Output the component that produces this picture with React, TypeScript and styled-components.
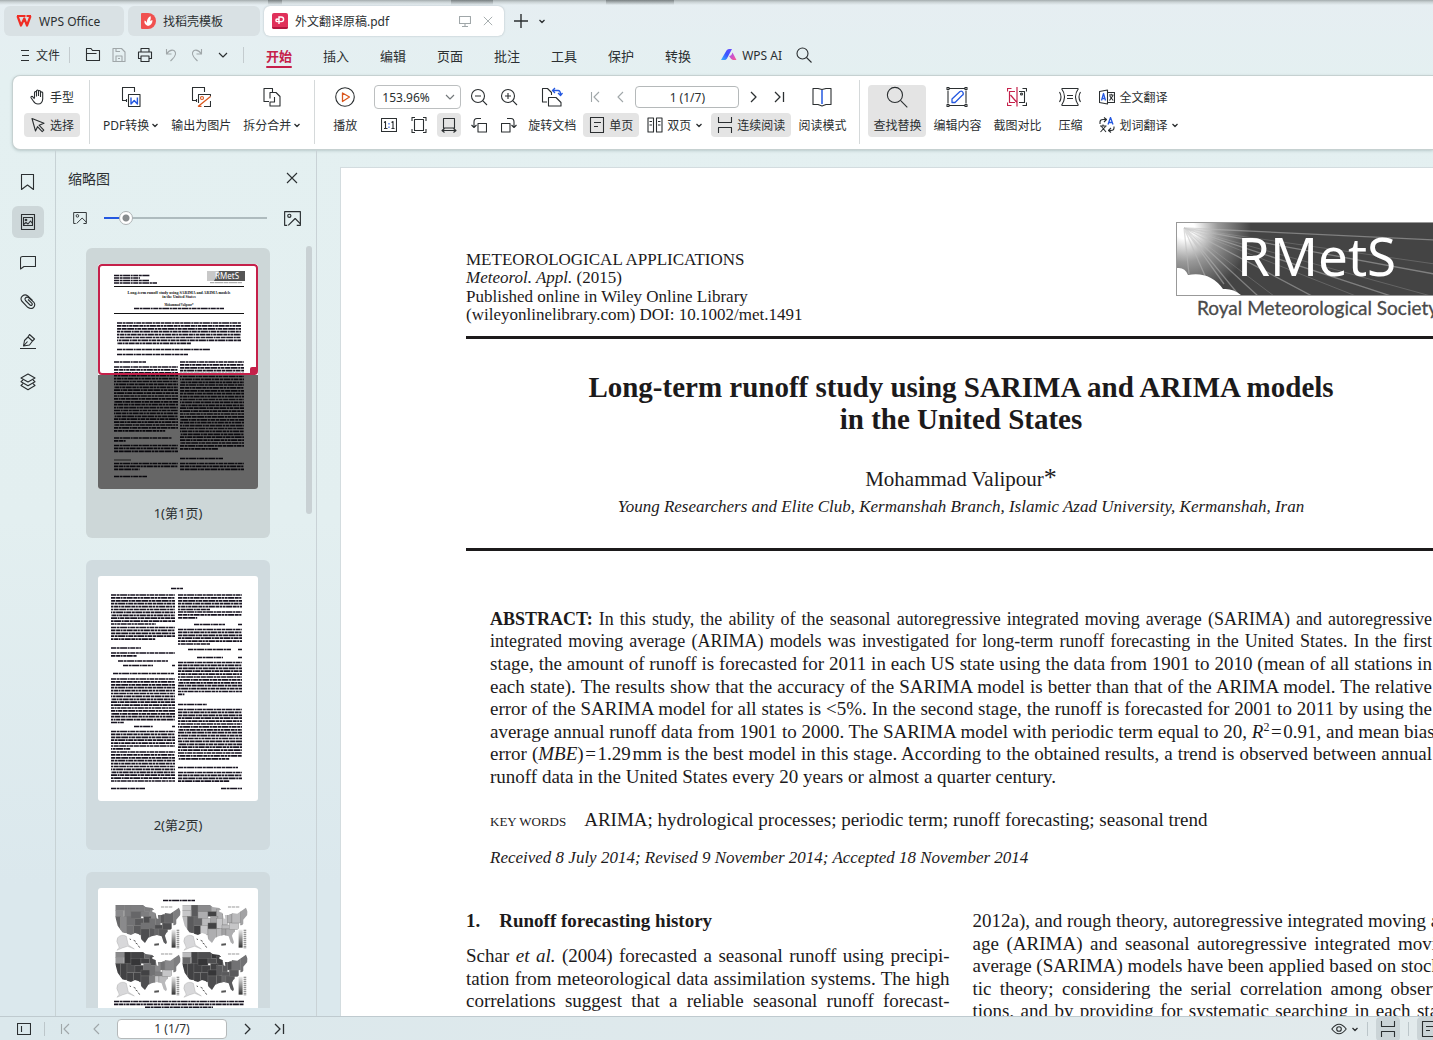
import React, { ReactNode, useState } from "react";
import styled, { createGlobalStyle, css } from "styled-components";

const UI_FONT = `"Noto Sans", "Noto Sans CJK SC", sans-serif`;
const SERIF = `"Liberation Serif", "Times New Roman", serif`;
const INK = "#2b2f31";
const RED = "#c5204a";
const BLUE = "#2458e0";
const ORANGE = "#d9571e";

const GlobalStyle = createGlobalStyle`
  *, *::before, *::after { box-sizing: border-box; }
  body { margin: 0; overflow: hidden; }
  button, input, select { font: inherit; color: inherit; }
  button { border: 0; background: none; padding: 0; margin: 0; cursor: pointer; }
`;

/* ---------- shell ---------- */

const Shell = styled.div`
  display: flex;
  flex-direction: column;
  height: 100vh;
  overflow: hidden;
  background: linear-gradient(180deg, #e6eef2 0, #e4f0f1 80px, #e3eff0 50%, #dbe8ed 85%, #dbe8ed 100%);
  color: ${INK};
  font-family: ${UI_FONT};
  font-size: 12px;
`;

const CAST = "linear-gradient(180deg, rgba(70, 76, 78, 0.45), transparent)";

const TabStrip = styled.header`
  display: flex;
  align-items: center;
  gap: 4px;
  padding: 6px 4px 4px;
  background:
    ${CAST} 268px 0 / 14px 5px no-repeat,
    ${CAST} 451px 0 / 42px 5px no-repeat,
    ${CAST} 606px 0 / 68px 5px no-repeat,
    linear-gradient(180deg, #a3abad 0, #c9d1d3 2px, transparent 5px);
`;

const Tab = styled.div<{ $width: number; $active?: boolean }>`
  display: flex;
  align-items: center;
  gap: 7px;
  width: ${(p) => p.$width}px;
  height: 30px;
  padding: 0 8px 0 ${(p) => (p.$active ? 8 : 12)}px;
  border-radius: 6px;
  background: ${(p) => (p.$active ? "#fff" : "#d9e1e4")};
  box-shadow: ${(p) => (p.$active ? "0 0 2px rgba(60, 80, 90, 0.35)" : "none")};
`;

const TabName = styled.button`
  flex: 1;
  text-align: left;
  white-space: nowrap;
`;

const IconButton = styled.button<{ $size?: number; $on?: boolean; $dim?: boolean }>`
  display: inline-flex;
  align-items: center;
  justify-content: center;
  flex: none;
  width: ${(p) => p.$size ?? 24}px;
  height: ${(p) => p.$size ?? 24}px;
  border-radius: 4px;
  background: ${(p) => (p.$on ? "#e4e4e4" : "transparent")};
  color: ${(p) => (p.$dim ? "#a0a7a9" : INK)};
`;

const MenuBar = styled.nav`
  display: flex;
  align-items: center;
  height: 35px;
  padding: 0 20px 5px;
`;

const FileButton = styled.button`
  display: flex;
  align-items: center;
  gap: 6px;
  width: 42px;
  white-space: nowrap;
`;

const Separator = styled.span<{ $gap: number; $after?: number }>`
  width: 1px;
  height: 16px;
  margin: 0 ${(p) => p.$after ?? p.$gap}px 0 ${(p) => p.$gap}px;
  background: #c4cccf;
`;

const QuickTools = styled.div`
  display: flex;
  gap: 2px;
`;

const MenuList = styled.div`
  display: flex;
  gap: 31px;
`;

const MenuItem = styled.button<{ $active?: boolean }>`
  position: relative;
  height: 26px;
  font-size: 13px;
  font-weight: ${(p) => (p.$active ? 700 : 400)};
  color: ${(p) => (p.$active ? RED : INK)};
  ${(p) =>
    p.$active &&
    css`
      &::after {
        content: "";
        position: absolute;
        left: 0;
        right: 0;
        bottom: 0;
        height: 2px;
        border-radius: 1px;
        background: ${RED};
      }
    `}
`;

const AiButton = styled.button`
  display: flex;
  align-items: center;
  gap: 5px;
  margin-left: 30px;
`;

/* ---------- ribbon ---------- */

const Ribbon = styled.section`
  display: flex;
  align-items: flex-start;
  flex: none;
  height: 75px;
  margin-left: 12px;
  padding: 9px 11px 0;
  border: 1px solid #c6d1d1;
  border-right: 0;
  border-radius: 8px 0 0 8px;
  background: #fff;
  box-shadow: 0 1px 3px rgba(60, 90, 90, 0.25);
  overflow: hidden;
`;

const Rows = styled.div`
  display: flex;
  flex-direction: column;
  gap: 4px;
  flex: none;
`;

const Row = styled.div<{ $gap?: number; $between?: boolean }>`
  display: flex;
  align-items: center;
  justify-content: ${(p) => (p.$between ? "space-between" : "flex-start")};
  gap: ${(p) => p.$gap ?? 0}px;
  height: 24px;
`;

const RibbonRule = styled.span<{ $before: number; $after: number }>`
  flex: none;
  width: 1px;
  height: 64px;
  margin: -5px ${(p) => p.$after}px 0 ${(p) => p.$before}px;
  background: #d5d9da;
`;

const InlineTool = styled.button<{ $on?: boolean; $pad?: number }>`
  display: flex;
  align-items: center;
  gap: 4px;
  height: 24px;
  padding: 0 ${(p) => p.$pad ?? 6}px;
  border-radius: 4px;
  background: ${(p) => (p.$on ? "#e4e4e4" : "transparent")};
  white-space: nowrap;
`;

const ToolSet = styled.div<{ $gap?: number }>`
  display: flex;
  flex: none;
  gap: ${(p) => p.$gap ?? 12}px;
`;

const BigButton = styled.button<{ $on?: boolean }>`
  display: grid;
  grid-template-rows: 24px 24px;
  row-gap: 4px;
  justify-items: center;
  align-items: center;
  flex: none;
  padding: 0 ${(p) => (p.$on ? 5 : 0)}px;
  border-radius: 4px;
  background: ${(p) => (p.$on ? "#e4e4e4" : "transparent")};
  white-space: nowrap;
`;

const BigLabel = styled.span`
  display: flex;
  align-items: center;
  gap: 2px;
`;

const ZoomGrid = styled.div`
  display: grid;
  grid-template-columns: repeat(5, 30px);
  grid-auto-rows: 24px;
  row-gap: 4px;
  justify-items: center;
  flex: none;
  margin: 0 4px 0 17px;
`;

const ZoomBox = styled.label`
  position: relative;
  grid-column: span 3;
  justify-self: start;
  display: flex;
  width: 87px;
  height: 24px;
  svg {
    position: absolute;
    right: 5px;
    top: 6px;
    color: #73787a;
    pointer-events: none;
  }
`;

const ZoomSelect = styled.select`
  appearance: none;
  width: 100%;
  padding: 0 7px;
  border: 1px solid #bcbfc0;
  border-radius: 4px;
  background: #fff;
`;

const PageInput = styled.input<{ $width: number; $height: number }>`
  width: ${(p) => p.$width}px;
  height: ${(p) => p.$height}px;
  padding: 0;
  border: 1px solid #b5b9ba;
  border-radius: 4px;
  background: #fff;
  text-align: center;
`;

/* ---------- work area ---------- */

const Workspace = styled.div`
  display: flex;
  flex: 1;
  min-height: 0;
`;

const Rail = styled.aside`
  display: flex;
  flex-direction: column;
  gap: 8px;
  flex: none;
  width: 56px;
  padding: 16px 12px;
  border-right: 1px solid #c7d2d5;
`;

const RailButton = styled.button<{ $on?: boolean }>`
  display: flex;
  align-items: center;
  justify-content: center;
  width: 32px;
  height: 32px;
  border-radius: 6px;
  background: ${(p) => (p.$on ? "#cdd7d9" : "transparent")};
`;

const Panel = styled.aside`
  display: flex;
  flex-direction: column;
  flex: none;
  width: 261px;
  border-right: 1px solid #c9d2d6;
`;

const PanelHead = styled.div`
  display: flex;
  align-items: center;
  justify-content: space-between;
  height: 56px;
  padding: 0 12px;
`;

const PanelTitle = styled.h2`
  margin: 0;
  font-size: 14px;
  font-weight: 400;
`;

const SizeRow = styled.div`
  display: flex;
  align-items: center;
  height: 24px;
  padding: 0 15px 0 17px;
`;

const SizeSlider = styled.input`
  appearance: none;
  flex: 1;
  height: 16px;
  margin: 0 17px;
  background: linear-gradient(90deg, ${BLUE} 0 15px, #aebbbe 15px) center / 100% 2px no-repeat;
  &::-webkit-slider-thumb {
    appearance: none;
    width: 14px;
    height: 14px;
    border: 1px solid #aeb3b5;
    border-radius: 50%;
    background: radial-gradient(circle, #888c8e 0 3px, #fff 4px);
  }
`;

const ThumbArea = styled.div`
  display: flex;
  flex: 1;
  min-height: 0;
  margin: 16px 4px 8px 30px;
  justify-content: space-between;
`;

const ThumbList = styled.div`
  display: flex;
  flex-direction: column;
  gap: 22px;
  padding-top: 2px;
  overflow: hidden;
`;

const Scrollbar = styled.div`
  width: 6px;
  height: 268px;
  border-radius: 3px;
  background: #c9d1d4;
`;

const ThumbCard = styled.button<{ $on?: boolean }>`
  display: flex;
  flex-direction: column;
  align-items: center;
  gap: 15px;
  flex: none;
  width: 184px;
  padding: 16px 12px;
  height: 290px;
  border-radius: 6px;
  background: ${(p) => (p.$on ? "#cdd7d8" : "#d0dbdf")};
`;

const ThumbSheet = styled.span`
  position: relative;
  display: block;
  width: 160px;
  height: 226px;
  border-radius: 3px;
  background: #fff;
  overflow: hidden;
  svg { display: block; }
`;

const ThumbLabel = styled.span`
  font-size: 13px;
  line-height: 18px;
`;

const Shade = styled.span`
  position: absolute;
  inset: 111px 0 0;
  background: rgba(0, 0, 0, 0.6);
`;

const ViewFrame = styled.span`
  position: absolute;
  inset: 0 0 114px;
  border: 2px solid ${RED};
  border-radius: 4px;
  &::after {
    content: "";
    position: absolute;
    right: 0;
    bottom: 0;
    width: 6px;
    height: 6px;
    border-radius: 2px 0 0;
    background: ${RED};
  }
`;

/* ---------- document ---------- */

const Canvas = styled.main`
  flex: 1;
  min-width: 0;
  padding: 17px 0 0 23px;
  overflow: hidden;
`;

const Sheet = styled.article`
  width: 1243px;
  min-height: 100%;
  padding: 54px 126px 0 125px;
  border: 1px solid #d3dcdf;
  background: #fff;
  color: #1c1a1b;
  font-family: ${SERIF};
`;

const Masthead = styled.div`
  display: flex;
  justify-content: space-between;
  border-bottom: 3px solid #1c1a1b;
`;

const Journal = styled.p`
  margin: 29px 0 12px;
  font-size: 17px;
  line-height: 18px;
  white-space: nowrap;
  span { display: block; }
  span:nth-child(2) { margin-bottom: 1px; }
`;

const TitleBlock = styled.div`
  padding: 32px 0 31px;
  border-bottom: 3px solid #1c1a1b;
  text-align: center;
`;

const PaperTitle = styled.h1`
  margin: 0 0 32px;
  font-size: 29px;
  line-height: 32px;
`;

const Author = styled.p`
  margin: 0 0 6px;
  font-size: 21px;
  line-height: 24px;
  span { font-size: 26px; line-height: 0; }
`;

const Small = styled.p`
  margin: 0;
  font-size: 17px;
  line-height: 20px;
  font-style: italic;
  white-space: nowrap;
`;

const AbstractBlock = styled.section`
  margin: 57px 24px 0;
`;

const Para = styled.p`
  margin: 0;
  font-size: 19px;
  line-height: 22px;
`;

const Line = styled.span<{ $ragged?: boolean; $dense?: boolean }>`
  display: block;
  font-size: ${(p) => (p.$dense ? 18 : 19)}px;
  text-align: ${(p) => (p.$ragged ? "left" : "justify")};
  text-align-last: ${(p) => (p.$ragged ? "left" : "justify")};
  white-space: nowrap;
  &:nth-child(even) { line-height: 23px; }
  sup { font-size: 12px; line-height: 0; }
`;

const Keywords = styled.p`
  display: flex;
  align-items: baseline;
  gap: 18px;
  margin: 21px 0 15px;
  font-size: 19px;
  line-height: 22px;
  small { font-size: 13px; }
`;

const Columns = styled.div`
  display: grid;
  grid-template-columns: repeat(2, minmax(0, 1fr));
  gap: 23px;
  margin-top: 42px;
`;

const SectionTitle = styled.h2`
  display: flex;
  gap: 19px;
  margin: 0 0 13px;
  font-size: 19px;
  line-height: 22px;
`;

/* ---------- status bar ---------- */

const StatusBar = styled.footer`
  display: flex;
  align-items: center;
  justify-content: space-between;
  flex: none;
  height: 24px;
  border-top: 1px solid #bfcacf;
  background: linear-gradient(90deg, #dbe8ec, #e2eaec);
  overflow: hidden;
`;

const StatusGroup = styled.div<{ $left: number }>`
  display: flex;
  align-items: center;
  flex: none;
  gap: 8px;
  height: 22px;
  padding-left: ${(p) => p.$left}px;
  & > button:last-child { margin-right: -8px; }
`;

const StatusRule = styled.span`
  width: 1px;
  height: 14px;
  background: #bcc6ca;
`;

const ViewToggle = styled(IconButton)`
  background: #cbd4d7;
`;

/* ---------- icons ---------- */

type IconProps = { w?: number; h?: number; box?: string; sw?: number; children: ReactNode };

const Icon = ({ w = 20, h, box, sw = 1.1, children }: IconProps) => (
  <svg
    width={w}
    height={h ?? w}
    viewBox={box ?? `0 0 ${w} ${h ?? w}`}
    fill="none"
    stroke="currentColor"
    strokeWidth={sw}
    strokeLinejoin="round"
    aria-hidden="true"
  >
    {children}
  </svg>
);

const Caret = () => (
  <Icon w={8} sw={1.3}><path d="M1.500 3L4 5.500 6.500 3" /></Icon>
);
const Chevron = () => (
  <Icon w={12}><path d="M2 4l4 4 4-4" /></Icon>
);
const Cross = ({ s = 12 }: { s?: number }) => (
  <Icon w={s} box="0 0 12 12"><path d="M1 1l10 10M11 1L1 11" /></Icon>
);
const First = () => <Icon w={12}><path d="M2.500 1v10M10 1L5 6l5 5" /></Icon>;
const Prev = () => <Icon w={12}><path d="M8 1L3 6l5 5" /></Icon>;
const Next = () => <Icon w={12} sw={1.3}><path d="M4 1l5 5-5 5" /></Icon>;
const Last = () => <Icon w={12} sw={1.3}><path d="M2 1l5 5-5 5M10.500 1v10" /></Icon>;

const WpsLogo = () => (
  <svg width="16" height="14" viewBox="0 0 16 14" aria-hidden="true">
    <path d="M1 2h8.500M10.500 2H15" stroke="#f02d24" strokeWidth="2" />
    <path d="M1.500 2L5 11.500 8.300 4.500 11 11.500 14.500 2" fill="none" stroke="#f02d24" strokeWidth="2.200" strokeLinejoin="round" />
  </svg>
);
const DocerLogo = () => (
  <svg width="16" height="16" viewBox="0 0 16 16" aria-hidden="true">
    <path d="M2 0h6a8 8 0 0 1 0 16H2a1 1 0 0 1-1-1V1a1 1 0 0 1 1-1z" fill="#f0504f" />
    <path d="M8 13c-3-1-4-3-3.500-5.500C6 8 6.500 9 7 10c-.5-3 1-5.500 3.500-7 .5 2 .3 3.500-.5 5 .8-.6 1.500-.8 2.500-.7C12.500 10 11 12.500 8 13z" fill="#fff" />
  </svg>
);
const PdfLogo = () => (
  <svg width="16" height="16" viewBox="0 0 16 16" aria-hidden="true">
    <rect width="16" height="16" rx="2" fill="#e0305a" />
    <path d="M0 14h16v0a2 2 0 0 1-2 2H2a2 2 0 0 1-2-2z" fill="#b3173f" />
    <path d="M7 11V4H9.300a2.300 2.300 0 0 1 0 4.600H5.200a1.300 1.300 0 1 1 1.300-1.500" fill="none" stroke="#fff" strokeWidth="1.400" />
  </svg>
);
const AiLogo = () => (
  <svg width="16" height="14" viewBox="0 0 16 14" aria-hidden="true">
    <defs>
      <linearGradient id="aiA" x1="0" y1="1" x2="1" y2="0">
        <stop offset="0" stopColor="#35b6ff" /><stop offset="0.500" stopColor="#3a55ff" /><stop offset="1" stopColor="#6a48ff" />
      </linearGradient>
      <linearGradient id="aiB" x1="0" y1="0" x2="1" y2="1">
        <stop offset="0" stopColor="#a04dff" /><stop offset="1" stopColor="#ff5a8c" />
      </linearGradient>
    </defs>
    <path d="M0 12L5.500 2.500Q6.300 1 8 1h3L6 10.500Q5 12 3.500 12z" fill="url(#aiA)" />
    <path d="M8 8q2.500 0 3.500-3.500L15.500 12H12Q10 11.500 8 8z" fill="url(#aiB)" />
  </svg>
);

const Hamburger = () => <Icon w={10} h={12}><path d="M1 1.500h8M2 6.500h7M1 11.500h8" /></Icon>;
const Folder = () => <Icon w={16}><path d="M1.500 13.500v-12h4.500l1.500 2h7v10zM1.500 6.500h10" /></Icon>;
const Save = () => <Icon w={16}><path d="M2 1.500h8.500l3.500 3.500v9.500H2zM5 1.500v3h4M5 14v-5h6v5M7 11.500h2" /></Icon>;
const Printer = () => <Icon w={16}><path d="M4 5V1.500h8V5M4 11.500H1.500V5h13v6.500H12M4 9h8v5.500H4z" /></Icon>;
const Undo = () => <Icon w={16}><path d="M3.500 2v5h5M3.500 7Q7 2 11 3.500q4 3-2 9l-1.500 1.500" /></Icon>;
const Redo = () => <Icon w={16}><path d="M12.500 2v5h-5M12.500 7Q9 2 5 3.500q-4 3 2 9L8.500 14" /></Icon>;
const Search = ({ s = 16 }: { s?: number }) => (
  <Icon w={s} box="0 0 16 16" sw={s > 18 ? 0.8 : 1.1}><circle cx="6.500" cy="6.500" r="5.500" /><path d="M10.500 10.500l5 5" /></Icon>
);
const ZoomSign = ({ plus }: { plus?: boolean }) => (
  <Icon w={18}><circle cx="8" cy="8" r="6.500" /><path d="M12.700 12.700l4.300 4.300M5 8h6" />{plus && <path d="M8 5v6" />}</Icon>
);
const Hand = () => (
  <Icon w={16}><path d="M4.500 9V3.500a1 1 0 0 1 2 0V7.500M6.500 7V2a1 1 0 0 1 2 0v5M8.500 7V2.500a1 1 0 0 1 2 0V8M10.500 8V4a1 1 0 0 1 2.200 0V10c0 3-1.700 5-4.700 5-2.500 0-3.500-1-4.700-3L1.200 9C.5 7.700 2 6.800 3 8l1.500 2" /></Icon>
);
const Pointer = () => <Icon w={16}><path d="M2 1.500l12 4.700-5 2 4.800 5-1.600 1.500-4.700-5L5.500 14z" /></Icon>;

const Convert = () => (
  <Icon><path d="M5 13.500H1.500V.5h12V5M5.500 12v3" /><rect x="7.500" y="7.500" width="11.500" height="12" /><path d="M10 10.500v6.500l3.200-3.500 3.200 3.500v-6.500" stroke={BLUE} strokeWidth="1.400" /></Icon>
);
const ToImage = () => (
  <Icon><path d="M5 13.500H1.500V.5h12V5M5.500 12v3" /><path d="M19.500 14v5.500H13M7.500 16V7.500h12v2" /><circle cx="11" cy="11" r="1.500" stroke={ORANGE} /><path d="M7 19.500L19.500 9.500M7.500 19.500h3" stroke={ORANGE} strokeWidth="1.300" /></Icon>
);
const Split = () => (
  <Icon><path d="M7 14.500H2V1.500h8.500V5" /><path d="M8 11.500v-6h6l4 4v9.500H8v-4h4.500v-5" /></Icon>
);
const Play = () => <Icon><circle cx="10" cy="10" r="9.300" /><path d="M7.500 6l7 4-7 4.500z" stroke={ORANGE} strokeWidth="1.300" /></Icon>;
const Actual = () => (
  <Icon w={16}><rect x=".5" y="1.500" width="15" height="13" /><path d="M3 5.500l1.500-1v7M3 11.500h3.500M10.500 5.500l1.500-1v7M10.500 11.500H13.500" /><path d="M8 6v1.500M8 9.500V11" stroke={BLUE} /></Icon>
);
const FitPage = () => <Icon w={16}><rect x="3.500" y="2.500" width="9" height="11" /><path d="M1 4V.5h3M12 .5h3V4M15 12v3.500h-3M4 15.500H1V12" /></Icon>;
const FitWidth = () => <Icon w={16}><path d="M2.500 11V1.500h11V11zM1 13.500h14M3.500 11.500l-2.500 2 2.500 2M12.500 11.500l2.500 2-2.500 2" /></Icon>;
const TurnLeft = () => <Icon w={16}><rect x="7" y="6.500" width="8.500" height="8.500" /><path d="M10 1.500H6Q3 1.500 3 5v5M.5 8L3 10.500 5.500 8" /></Icon>;
const TurnRight = () => <Icon w={16}><rect x=".5" y="6.500" width="8.500" height="8.500" /><path d="M6 1.500h4q3 0 3 3.500v5M10.500 8l2.500 2.500L15.500 8" /></Icon>;
const RotateDoc = () => (
  <Icon w={22} h={20}><path d="M6 15H1.500V1.500h5l4 4V8M7.500 19v-8.500H15l5 5V19z" /><path d="M12 3.500h5q2.500 0 2.500 4M14 1l-2.500 2.500L14 6M17 6l2.500 2.500L21.500 6" stroke={BLUE} strokeWidth="1.300" /></Icon>
);
const Single = () => <Icon w={16}><path d="M1.500.5h13v15h-13zM5 5.500h7M5 9.500h4" /></Icon>;
const Double = () => <Icon w={16}><path d="M1 1h5.500v14H1zM9.500 1H15v14H9.500zM2.500 4.500H5M2.500 8H5M11 4.500h2.500M11 8h2.500" /></Icon>;
const Continuous = () => <Icon w={16}><path d="M1.500 0v5.500h13V0M1.500 16v-5.500h13V16" /></Icon>;
const Book = () => <Icon w={20}><path d="M10 2.500L6 1.500H1v16h5l4 1.500 4-1.500h5v-16h-5z" /><path d="M10 3v14" stroke={BLUE} strokeWidth="1.500" /></Icon>;
const EditBox = () => (
  <Icon w={22} h={20}><path d="M3 1.500h16M3 18.500h16M2 3.500v13M20 3.500v13" /><path d="M1 .5h2v2H1zM19 .5h2v2h-2zM1 17.500h2v2H1zM19 17.500h2v2h-2z" /><path d="M6 15.500v-3.500l8-7.500q2-1 3 1t-1 3l-7 7z" stroke={BLUE} strokeWidth="1.300" /></Icon>
);
const Compare = () => (
  <Icon w={20}><path d="M15.500 1.500h4v3M19.500 15.500v3h-4M12 4.500h5.500v11H12" /><circle cx="14.500" cy="7" r="1" /><path d="M10 0v19.500M4.500 1.500h-4v3M.5 15.500v3h4M8 4.500H2.500v11H8M3.500 8l6 7" stroke={RED} strokeWidth="1.200" /></Icon>
);
const Compress = () => <Icon w={22} h={20}><path d="M3 1.500h16M3 18.500h16M2.500 1.500q6 8 0 17M19.500 1.500q-6 8 0 17M.5 5q3 5 0 10M21.500 5q-3 5 0 10M8 8.500h6M8 11.500h6" /></Icon>;

const Translate = () => (
  <Icon w={16}><path d="M9 3.500h6.500v10H9M8.500 1v14L.5 13.500v-11z" /><path d="M2.500 11.500l2-7 2 7M3 9.500h3" stroke={BLUE} strokeWidth="1.300" /><path d="M10 6h4.500M12.200 4.800V6M10.500 11.500l3.500-5M10.800 7l3.400 4.500" /></Icon>
);
const WordTranslate = () => (
  <Icon w={16}><path d="M9 7.500l2.500-7 2.500 7M10 5.500h3.500" stroke={BLUE} strokeWidth="1.300" /><path d="M1 7V5q0-2.500 3-2.500h3M5 .5l2.500 2L5 5M15 9.500v1.500q0 2.500-3 2.500h-2M12 11l-2.500 2.500L12 15.500M1 9h6.500M4 7.500V9M1.500 15L6.500 9.500M2.500 9.500L7 15" /></Icon>
);

const Bookmark = () => <Icon w={16}><path d="M1.500 0.500h12v15l-6-4.500-6 4.500z" /></Icon>;
const ThumbIcon = () => <Icon w={16}><rect x="1.500" y="0.500" width="13" height="15" /><rect x="3.500" y="3.500" width="9" height="8" /><circle cx="6" cy="6" r=".8" /><path d="M3.500 10.500l2.500-2 2 1.500 2.500-3 2 2.500" /></Icon>;
const Comment = () => <Icon w={16}><path d="M.5 15V4.500q0-2 2-2H15.500v10H4z" /></Icon>;
const Clip = () => <Icon w={16}><path d="M12.500 6.500L7.500 1.700Q5 0 2.500 2T1.700 7l6 6.300q3 2.200 5.600.5 2.700-2.800.4-5.600L8.500 3.500Q6.500 2.500 5.500 3.800T5.500 6.500l4.500 4.500q1.200.8 1.900.1.800-.8-.1-2L8 5.500" /></Icon>;
const Pen = () => <Icon w={16}><path d="M0 14.500h16M3.500 12l1-5.500L8 3l4.500 4-3 4zM8 3L9.500.5l5 4.500-2 2M3.500 12l4-4.500" /></Icon>;
const Layers = () => <Icon w={16} h={18}><path d="M8 1l7 4-7 4-7-4zM3 7L1 8.700 8 12.800l7-4.100L13 7M3 10.700l-2 1.800L8 16.800l7-4.300-2-1.800" /></Icon>;
const Picture = ({ s }: { s: number }) => <Icon w={s} h={s - 2} box="0 0 16 14"><path d="M3 13.400H.6V.6h14.800v12.800H12" /><circle cx="5" cy="4.500" r="1.500" /><path d="M4 13.500l6.500-6.500 5 5" /></Icon>;
const Monitor = () => <Icon w={12}><path d="M.5 1.500h11v7H.5zM3 11.500h6M6 8.500v3" /></Icon>;
const PlusIcon = () => <Icon w={14} sw={1.400}><path d="M7 0v14M0 7h14" /></Icon>;
const PanelIcon = () => <Icon w={14} h={12}><path d="M.5.5h13v11H.5zM4.500 3v6" /></Icon>;
const Eye = () => <Icon w={16}><path d="M.8 8Q8-1.500 15.200 8 8 17.500.8 8z" /><circle cx="8" cy="8" r="2.300" /></Icon>;

/* ---------- society logo ---------- */

const SocietyLogo = () => (
  <svg width="280" height="104" viewBox="0 0 280 104" role="img" aria-label="RMetS Royal Meteorological Society">
    <defs>
      <radialGradient id="sun" gradientUnits="userSpaceOnUse" cx="9" cy="7" r="66">
        <stop offset="0" stopColor="#fff" />
        <stop offset="0.150" stopColor="#fff" />
        <stop offset="0.500" stopColor="#999" />
        <stop offset="1" stopColor="#444" />
      </radialGradient>
      <clipPath id="plate"><rect x="0" y="0" width="280" height="73" /></clipPath>
    </defs>
    <rect x="0.500" y="0.500" width="279" height="73" fill="url(#sun)" stroke="#999" />
    <g clipPath="url(#plate)" stroke="#bbb" strokeOpacity="0.500" fill="none">
      <path d="M8 6L13 52M8 6L30 56M8 6L48 62M8 6L62 72M8 6L82 74M8 6L136 74M8 6L215 74M8 6L280 56M8 6L280 19" strokeWidth="1.300" />
      <path d="M8 6L98 74M8 6L180 74M8 6L255 74M8 6L280 45" strokeWidth="0.800" strokeOpacity="0.350" />
    </g>
    <path d="M1 73V46q8-1 11 7 22-4 35 14 10-1 18 6z" fill="#fff" />
    <text x="61" y="54" fill="#fff" fontFamily="Noto Sans, sans-serif" fontSize="53">RMetS</text>
    <text x="21" y="93" fill="#4a4a4a" stroke="#4a4a4a" strokeWidth="0.300" fontFamily="Lato, sans-serif" fontSize="19">Royal Meteorological Society</text>
  </svg>
);

/* ---------- thumbnails ---------- */

type Block = { x: number; w: number; y: number; n: number; last?: number };

const PITCH = 2.9;
const DASHES = ["5 .6 3 .5 7 .6 2 .5", "3 .5 6 .6 4 .5 2 .6", "7 .6 2 .5 4 .6 5 .5"];

const TextBlock = ({ x, w, y, n, last = 0.7 }: Block) => (
  <g stroke="#16121f" strokeWidth="1.700">
    {Array.from({ length: n }, (_, i) => (
      <path
        key={i}
        d={`M${x} ${y + i * PITCH}h${n > 1 && i === n - 1 ? w * last : w}`}
        strokeDasharray={DASHES[i % 3]}
        strokeDashoffset={(i * 5) % 13}
      />
    ))}
  </g>
);

const firstPage: Block[] = [
  { x: 16, w: 36, y: 11.5, n: 1 }, { x: 16, w: 26, y: 14, n: 1 }, { x: 16, w: 35, y: 16.5, n: 1 }, { x: 16, w: 43, y: 19, n: 1 },
  { x: 36, w: 90, y: 44.5, n: 1 },
  { x: 19, w: 124, y: 59, n: 8, last: 0.6 }, { x: 19, w: 93, y: 85.5, n: 1 }, { x: 19, w: 71, y: 90.5, n: 1 },
  { x: 16, w: 32, y: 98, n: 1 }, { x: 16, w: 64, y: 103, n: 23, last: 0.8 },
  { x: 16, w: 58, y: 174, n: 2, last: 0.2 }, { x: 16, w: 64, y: 181.5, n: 3, last: 1 },
  { x: 16, w: 64, y: 199.5, n: 3, last: 0.4 }, { x: 16, w: 33, y: 212.5, n: 1 },
  { x: 82, w: 64, y: 98, n: 8, last: 1 }, { x: 82, w: 64, y: 121, n: 23, last: 0.6 },
  { x: 82, w: 43, y: 194.5, n: 1 }, { x: 82, w: 64, y: 199.5, n: 3, last: 1 },
];

const secondPage: Block[] = [
  { x: 73, w: 12, y: 12.5, n: 1 },
  { x: 13, w: 64, y: 19, n: 11 }, { x: 13, w: 64, y: 51.5, n: 5 }, { x: 13, w: 30, y: 72, n: 1 },
  { x: 13, w: 64, y: 77, n: 2, last: 0.4 }, { x: 20, w: 50, y: 85, n: 1 }, { x: 25, w: 30, y: 89.5, n: 1 }, { x: 74, w: 3, y: 89.5, n: 1 },
  { x: 15, w: 61, y: 97.5, n: 1 }, { x: 13, w: 64, y: 103, n: 16, last: 0.2 }, { x: 36, w: 19, y: 150.5, n: 1 }, { x: 74, w: 3, y: 150.5, n: 1 },
  { x: 13, w: 64, y: 155.500, n: 7, last: 0.3 }, { x: 13, w: 64, y: 176, n: 11, last: 1 }, { x: 13, w: 34, y: 212.5, n: 1 },
  { x: 80, w: 64, y: 19, n: 6, last: 0.5 }, { x: 80, w: 64, y: 36, n: 3, last: 0.3 }, { x: 96, w: 31, y: 48.5, n: 1 }, { x: 140, w: 4, y: 48.5, n: 1 },
  { x: 80, w: 64, y: 53.5, n: 6, last: 0.5 }, { x: 90, w: 43, y: 73.5, n: 1 }, { x: 140, w: 4, y: 73.5, n: 1 }, { x: 99, w: 26, y: 81.5, n: 1 }, { x: 140, w: 4, y: 81.5, n: 1 },
  { x: 80, w: 64, y: 86.5, n: 12, last: 0.1 }, { x: 80, w: 29, y: 128.5, n: 1 }, { x: 80, w: 64, y: 133.5, n: 18, last: 0.8 },
  { x: 80, w: 60, y: 191.5, n: 1 }, { x: 80, w: 64, y: 196.5, n: 4, last: 0.8 }, { x: 123, w: 21, y: 212.5, n: 1 },
];

const FirstThumb = () => (
  <svg width="160" height="226" aria-hidden="true">
    <rect width="160" height="226" fill="#fff" />
    {firstPage.map((b, i) => <TextBlock key={i} {...b} />)}
    <path d="M16 22.500h130M16 49.500h130" stroke="#111" />
    <path d="M16 196h17" stroke="#111" strokeWidth="0.800" />
    <rect x="109" y="7" width="38" height="10" fill="#555" />
    <path d="M109 7h12l-5 10h-7z" fill="#c8c8c8" />
    <text x="117" y="15" fill="#fff" fontFamily="Noto Sans, sans-serif" fontSize="8">RMetS</text>
    <path d="M112 18.700h32" stroke="#999" strokeDasharray="4 .5 9 .5" />
    <g fill="#111" fontFamily="Liberation Serif, serif" fontWeight="700" textAnchor="middle">
      <text x="81" y="30" fontSize="4">Long-term runoff study using SARIMA and ARIMA models</text>
      <text x="81" y="34" fontSize="4">in the United States</text>
      <text x="81" y="42" fontSize="3">Mohammad Valipour*</text>
    </g>
  </svg>
);

const SecondThumb = () => (
  <svg width="160" height="226" aria-hidden="true">
    {secondPage.map((b, i) => <TextBlock key={i} {...b} />)}
  </svg>
);

const OUTLINE =
  "M1 0L84 0 92 6 112 9 120 18 126 30 140 30 150 24 166 26 178 18 192 8 197 20 196 30 184 44 184 56 172 70 154 84 150 92 156 112 153 118 146 112 140 94 126 90 110 94 100 98 90 114 80 104 72 88 60 84 48 90 22 82 8 62 1 36z";

const CELLS = [
  [0, 0, 28, 16], [0, 16, 26, 18], [28, 0, 20, 38], [48, 0, 40, 22], [88, 0, 34, 20], [0, 34, 16, 60], [16, 34, 20, 50], [36, 34, 24, 28],
  [48, 20, 30, 20], [78, 20, 26, 14], [104, 12, 20, 28], [36, 62, 20, 30], [56, 62, 22, 28], [60, 40, 26, 22], [86, 34, 22, 20], [78, 54, 34, 18],
  [78, 72, 26, 46], [104, 40, 18, 30], [104, 70, 16, 30], [122, 28, 14, 32], [136, 28, 14, 26], [120, 60, 22, 12], [120, 72, 12, 24],
  [132, 72, 26, 48], [142, 54, 28, 20], [150, 20, 26, 34], [176, 0, 24, 60],
];

const MapFigure = ({ x, y, shades }: { x: number; y: number; shades: string }) => {
  const id = `map${x}-${y}`;
  return (
    <g transform={`translate(${x} ${y}) scale(.333)`}>
      <clipPath id={id}><path d={OUTLINE} /></clipPath>
      <g clipPath={`url(#${id})`} stroke="#777" strokeWidth="1">
        {CELLS.map(([cx, cy, w, h], i) => {
          const v = parseInt(shades[i % shades.length], 16) * 12 + 42;
          return <rect key={i} x={cx} y={cy} width={w} height={h} fill={`rgb(${v},${v},${v + 2})`} />;
        })}
      </g>
      <path d="M112 16l12-4 4 10 2 20-5-2-3-16-10-4z" fill="#fff" />
      <path d="M8 98q12-12 26-4l6 26 18 12-20-8q-16 4-32 12 10-8 4-16-8-10-2-22z" fill="#d8d8da" stroke="#999" />
      <path d="M44 102l4 2M56 106l6 3M62 114l6 4M70 122l4 6" stroke="#555" strokeWidth="3" />
      <path d="M118 116l14-1v6l-14 1z" fill="#555" />
      <path d="M138 6h36" stroke="#999" strokeWidth="3" strokeDasharray="10 2" />
      <rect x="170" y="74" width="12" height="54" fill="url(#legend)" />
      <path d="M189 74v56" stroke="#777" strokeWidth="8" strokeDasharray="3 3" />
    </g>
  );
};

const ThirdThumb = () => (
  <svg width="160" height="226" aria-hidden="true">
    <defs>
      <linearGradient id="legend" x1="0" y1="0" x2="0" y2="1">
        <stop offset="0" stopColor="#eee" /><stop offset="1" stopColor="#333" />
      </linearGradient>
    </defs>
    <TextBlock x={65} w={32} y={12.5} n={1} />
    <MapFigure x={17} y={17} shades="7877758657864436364643543576" />
    <MapFigure x={84} y={17} shades="dd48bc45b2b2dca2bdcdbcabdca" />
    <MapFigure x={17} y={64} shades="8912522312322262367867dcd87" />
    <MapFigure x={84} y={64} shades="c52312221322222134343454466" />
    <TextBlock x={16} w={130} y={113.500} n={2} last={1} />
    <TextBlock x={47} w={68} y={119.300} n={1} />
  </svg>
);

/* ---------- data ---------- */

const menus = ["开始", "插入", "编辑", "页面", "批注", "工具", "保护", "转换"];

const rail: [string, () => ReactNode][] = [
  ["书签", Bookmark], ["缩略图", ThumbIcon], ["批注", Comment], ["附件", Clip], ["签名", Pen], ["图层", Layers],
];

type TextLine = { text: ReactNode; dense?: boolean; ragged?: boolean };

const abstractLines: TextLine[] = [
  { dense: true, text: <><b>ABSTRACT:</b> In this study, the ability of the seasonal autoregressive integrated moving average (SARIMA) and autoregressive</> },
  { dense: true, text: "integrated moving average (ARIMA) models was investigated for long-term runoff forecasting in the United States. In the first" },
  { text: "stage, the amount of runoff is forecasted for 2011 in each US state using the data from 1901 to 2010 (mean of all stations in" },
  { text: "each state). The results show that the accuracy of the SARIMA model is better than that of the ARIMA model. The relative" },
  { text: "error of the SARIMA model for all states is <5%. In the second stage, the runoff is forecasted for 2001 to 2011 by using the" },
  { text: <>average annual runoff data from 1901 to 2000. The SARIMA model with periodic term equal to 20, <i>R</i><sup>2</sup>{"\u200a=\u200a"}0.91, and mean bias</> },
  { text: <>error (<i>MBE</i>){"\u200a=\u200a"}1.29{"\u200a"}mm is the best model in this stage. According to the obtained results, a trend is observed between annual</> },
  { ragged: true, text: "runoff data in the United States every 20 years or almost a quarter century." },
];

const leftLines: TextLine[] = [
  { text: <>Schar <i>et al.</i> (2004) forecasted a seasonal runoff using precipi-</> },
  { text: "tation from meteorological data assimilation systems. The high" },
  { text: "correlations suggest that a reliable seasonal runoff forecast-" },
];

const rightLines: TextLine[] = [
  { text: "2012a), and rough theory, autoregressive integrated moving aver-" },
  { text: "age (ARIMA) and seasonal autoregressive integrated moving" },
  { text: "average (SARIMA) models have been applied based on stochas-" },
  { text: "tic theory; considering the serial correlation among observa-" },
  { text: "tions, and by providing for systematic searching in each stage" },
];

/* ---------- composition ---------- */

const SetLines = ({ lines }: { lines: TextLine[] }) => (
  <Para>
    {lines.map((l, i) => <Line key={i} $dense={l.dense} $ragged={l.ragged}>{l.text}</Line>)}
  </Para>
);

const Tool = ({ icon, label, on, menu }: { icon: ReactNode; label: string; on?: boolean; menu?: boolean }) => (
  <BigButton $on={on}>
    {icon}
    <BigLabel>{label}{menu && <Caret />}</BigLabel>
  </BigButton>
);

const Pager = ({ page, onPage }: { page: string; onPage: (v: string) => void }) => (
  <Row $between>
    <IconButton $dim aria-label="第一页"><First /></IconButton>
    <IconButton $dim aria-label="上一页"><Prev /></IconButton>
    <PageInput $width={104} $height={22} aria-label="页码" value={page} onChange={(e) => onPage(e.target.value)} />
    <IconButton aria-label="下一页"><Next /></IconButton>
    <IconButton aria-label="最后一页"><Last /></IconButton>
  </Row>
);

export default function App() {
  const [page, setPage] = useState("1 (1/7)");
  const [size, setSize] = useState(10);

  return (
    <Shell>
      <GlobalStyle />
      <TabStrip>
        <Tab $width={120}><WpsLogo /><TabName>WPS Office</TabName></Tab>
        <Tab $width={132}><DocerLogo /><TabName>找稻壳模板</TabName></Tab>
        <Tab $width={240} $active>
          <PdfLogo /><TabName>外文翻译原稿.pdf</TabName>
          <IconButton $size={16} $dim aria-label="显示"><Monitor /></IconButton>
          <IconButton $size={16} $dim aria-label="关闭标签"><Cross s={10} /></IconButton>
        </Tab>
        <IconButton $size={26} aria-label="新建标签"><PlusIcon /></IconButton>
        <IconButton $size={8} aria-label="标签列表"><Caret /></IconButton>
      </TabStrip>

      <MenuBar>
        <FileButton><Hamburger />文件</FileButton>
        <Separator $gap={7} $after={11} />
        <QuickTools>
          <IconButton aria-label="打开"><Folder /></IconButton>
          <IconButton $dim aria-label="保存"><Save /></IconButton>
          <IconButton aria-label="打印"><Printer /></IconButton>
          <IconButton $dim aria-label="撤销"><Undo /></IconButton>
          <IconButton $dim aria-label="恢复"><Redo /></IconButton>
          <IconButton aria-label="更多"><Chevron /></IconButton>
        </QuickTools>
        <Separator $gap={8} $after={22} />
        <MenuList>
          {menus.map((m, i) => <MenuItem key={m} $active={i === 0}>{m}</MenuItem>)}
        </MenuList>
        <AiButton><AiLogo />WPS AI</AiButton>
        <IconButton aria-label="搜索" $size={44}><Search /></IconButton>
      </MenuBar>

      <Ribbon>
        <Rows>
          <InlineTool><Hand />手型</InlineTool>
          <InlineTool $on><Pointer />选择</InlineTool>
        </Rows>
        <RibbonRule $before={9} $after={13} />
        <ToolSet>
          <Tool icon={<Convert />} label="PDF转换" menu />
          <Tool icon={<ToImage />} label="输出为图片" />
          <Tool icon={<Split />} label="拆分合并" menu />
        </ToolSet>
        <RibbonRule $before={13} $after={18} />
        <Tool icon={<Play />} label="播放" />
        <ZoomGrid>
          <ZoomBox>
            <ZoomSelect aria-label="缩放比例" defaultValue="153.96%"><option>153.96%</option><option>100%</option></ZoomSelect>
            <Chevron />
          </ZoomBox>
          <IconButton aria-label="缩小"><ZoomSign /></IconButton>
          <IconButton aria-label="放大"><ZoomSign plus /></IconButton>
          <IconButton aria-label="实际大小"><Actual /></IconButton>
          <IconButton aria-label="适合页面"><FitPage /></IconButton>
          <IconButton $on aria-label="适合宽度"><FitWidth /></IconButton>
          <IconButton aria-label="向左旋转"><TurnLeft /></IconButton>
          <IconButton aria-label="向右旋转"><TurnRight /></IconButton>
        </ZoomGrid>
        <ToolSet $gap={7}>
          <Tool icon={<RotateDoc />} label="旋转文档" />
          <Rows>
            <Pager page={page} onPage={setPage} />
            <Row $gap={8}>
              <InlineTool $on><Single />单页</InlineTool>
              <InlineTool $pad={0}><Double />双页<Caret /></InlineTool>
              <InlineTool $on><Continuous />连续阅读</InlineTool>
            </Row>
          </Rows>
          <Tool icon={<Book />} label="阅读模式" />
        </ToolSet>
        <RibbonRule $before={13} $after={8} />
        <ToolSet $gap={7}>
          <Tool icon={<Search s={22} />} label="查找替换" on />
          <ToolSet>
            <Tool icon={<EditBox />} label="编辑内容" />
            <ToolSet $gap={17}>
              <Tool icon={<Compare />} label="截图对比" />
              <Tool icon={<Compress />} label="压缩" />
              <Rows>
                <InlineTool $pad={0}><Translate />全文翻译</InlineTool>
                <InlineTool $pad={0}><WordTranslate />划词翻译<Caret /></InlineTool>
              </Rows>
            </ToolSet>
          </ToolSet>
        </ToolSet>
      </Ribbon>

      <Workspace>
        <Rail>
          {rail.map(([name, Glyph], i) => (
            <RailButton key={name} $on={i === 1} aria-label={name}><Glyph /></RailButton>
          ))}
        </Rail>
        <Panel>
          <PanelHead>
            <PanelTitle>缩略图</PanelTitle>
            <IconButton aria-label="关闭面板"><Cross /></IconButton>
          </PanelHead>
          <SizeRow>
            <Picture s={14} />
            <SizeSlider type="range" aria-label="缩略图大小" min={0} max={100} value={size} onChange={(e) => setSize(Number(e.target.value))} />
            <Picture s={17} />
          </SizeRow>
          <ThumbArea>
            <ThumbList>
              <ThumbCard $on>
                <ThumbSheet><FirstThumb /><Shade /><ViewFrame /></ThumbSheet>
                <ThumbLabel>1(第1页)</ThumbLabel>
              </ThumbCard>
              <ThumbCard>
                <ThumbSheet><SecondThumb /></ThumbSheet>
                <ThumbLabel>2(第2页)</ThumbLabel>
              </ThumbCard>
              <ThumbCard aria-label="第3页">
                <ThumbSheet><ThirdThumb /></ThumbSheet>
              </ThumbCard>
            </ThumbList>
            <Scrollbar />
          </ThumbArea>
        </Panel>

        <Canvas>
          <Sheet>
            <Masthead>
              <Journal>
                <span>METEOROLOGICAL APPLICATIONS</span>
                <span><i>Meteorol. Appl.</i> (2015)</span>
                <span>Published online in Wiley Online Library</span>
                <span>(wileyonlinelibrary.com) DOI: 10.1002/met.1491</span>
              </Journal>
              <SocietyLogo />
            </Masthead>
            <TitleBlock>
              <PaperTitle>Long-term runoff study using SARIMA and ARIMA models<br />in the United States</PaperTitle>
              <Author>Mohammad Valipour<span>*</span></Author>
              <Small>Young Researchers and Elite Club, Kermanshah Branch, Islamic Azad University, Kermanshah, Iran</Small>
            </TitleBlock>
            <AbstractBlock>
              <SetLines lines={abstractLines} />
              <Keywords><small>KEY WORDS</small>ARIMA; hydrological processes; periodic term; runoff forecasting; seasonal trend</Keywords>
              <Small>Received 8 July 2014; Revised 9 November 2014; Accepted 18 November 2014</Small>
            </AbstractBlock>
            <Columns>
              <div>
                <SectionTitle><span>1.</span>Runoff forecasting history</SectionTitle>
                <SetLines lines={leftLines} />
              </div>
              <SetLines lines={rightLines} />
            </Columns>
          </Sheet>
        </Canvas>
      </Workspace>

      <StatusBar>
        <StatusGroup $left={12}>
          <IconButton aria-label="侧边栏"><PanelIcon /></IconButton>
          <StatusRule />
          <IconButton $dim aria-label="第一页"><First /></IconButton>
          <IconButton $dim aria-label="上一页"><Prev /></IconButton>
          <PageInput $width={110} $height={20} aria-label="当前页" value={page} onChange={(e) => setPage(e.target.value)} />
          <IconButton aria-label="下一页"><Next /></IconButton>
          <IconButton aria-label="最后一页"><Last /></IconButton>
        </StatusGroup>
        <StatusGroup $left={0}>
          <InlineTool $pad={0}><Eye /><Caret /></InlineTool>
          <StatusRule />
          <ViewToggle aria-label="连续阅读"><Continuous /></ViewToggle>
          <StatusRule />
          <ViewToggle aria-label="单页"><Single /></ViewToggle>
        </StatusGroup>
      </StatusBar>
    </Shell>
  );
}
